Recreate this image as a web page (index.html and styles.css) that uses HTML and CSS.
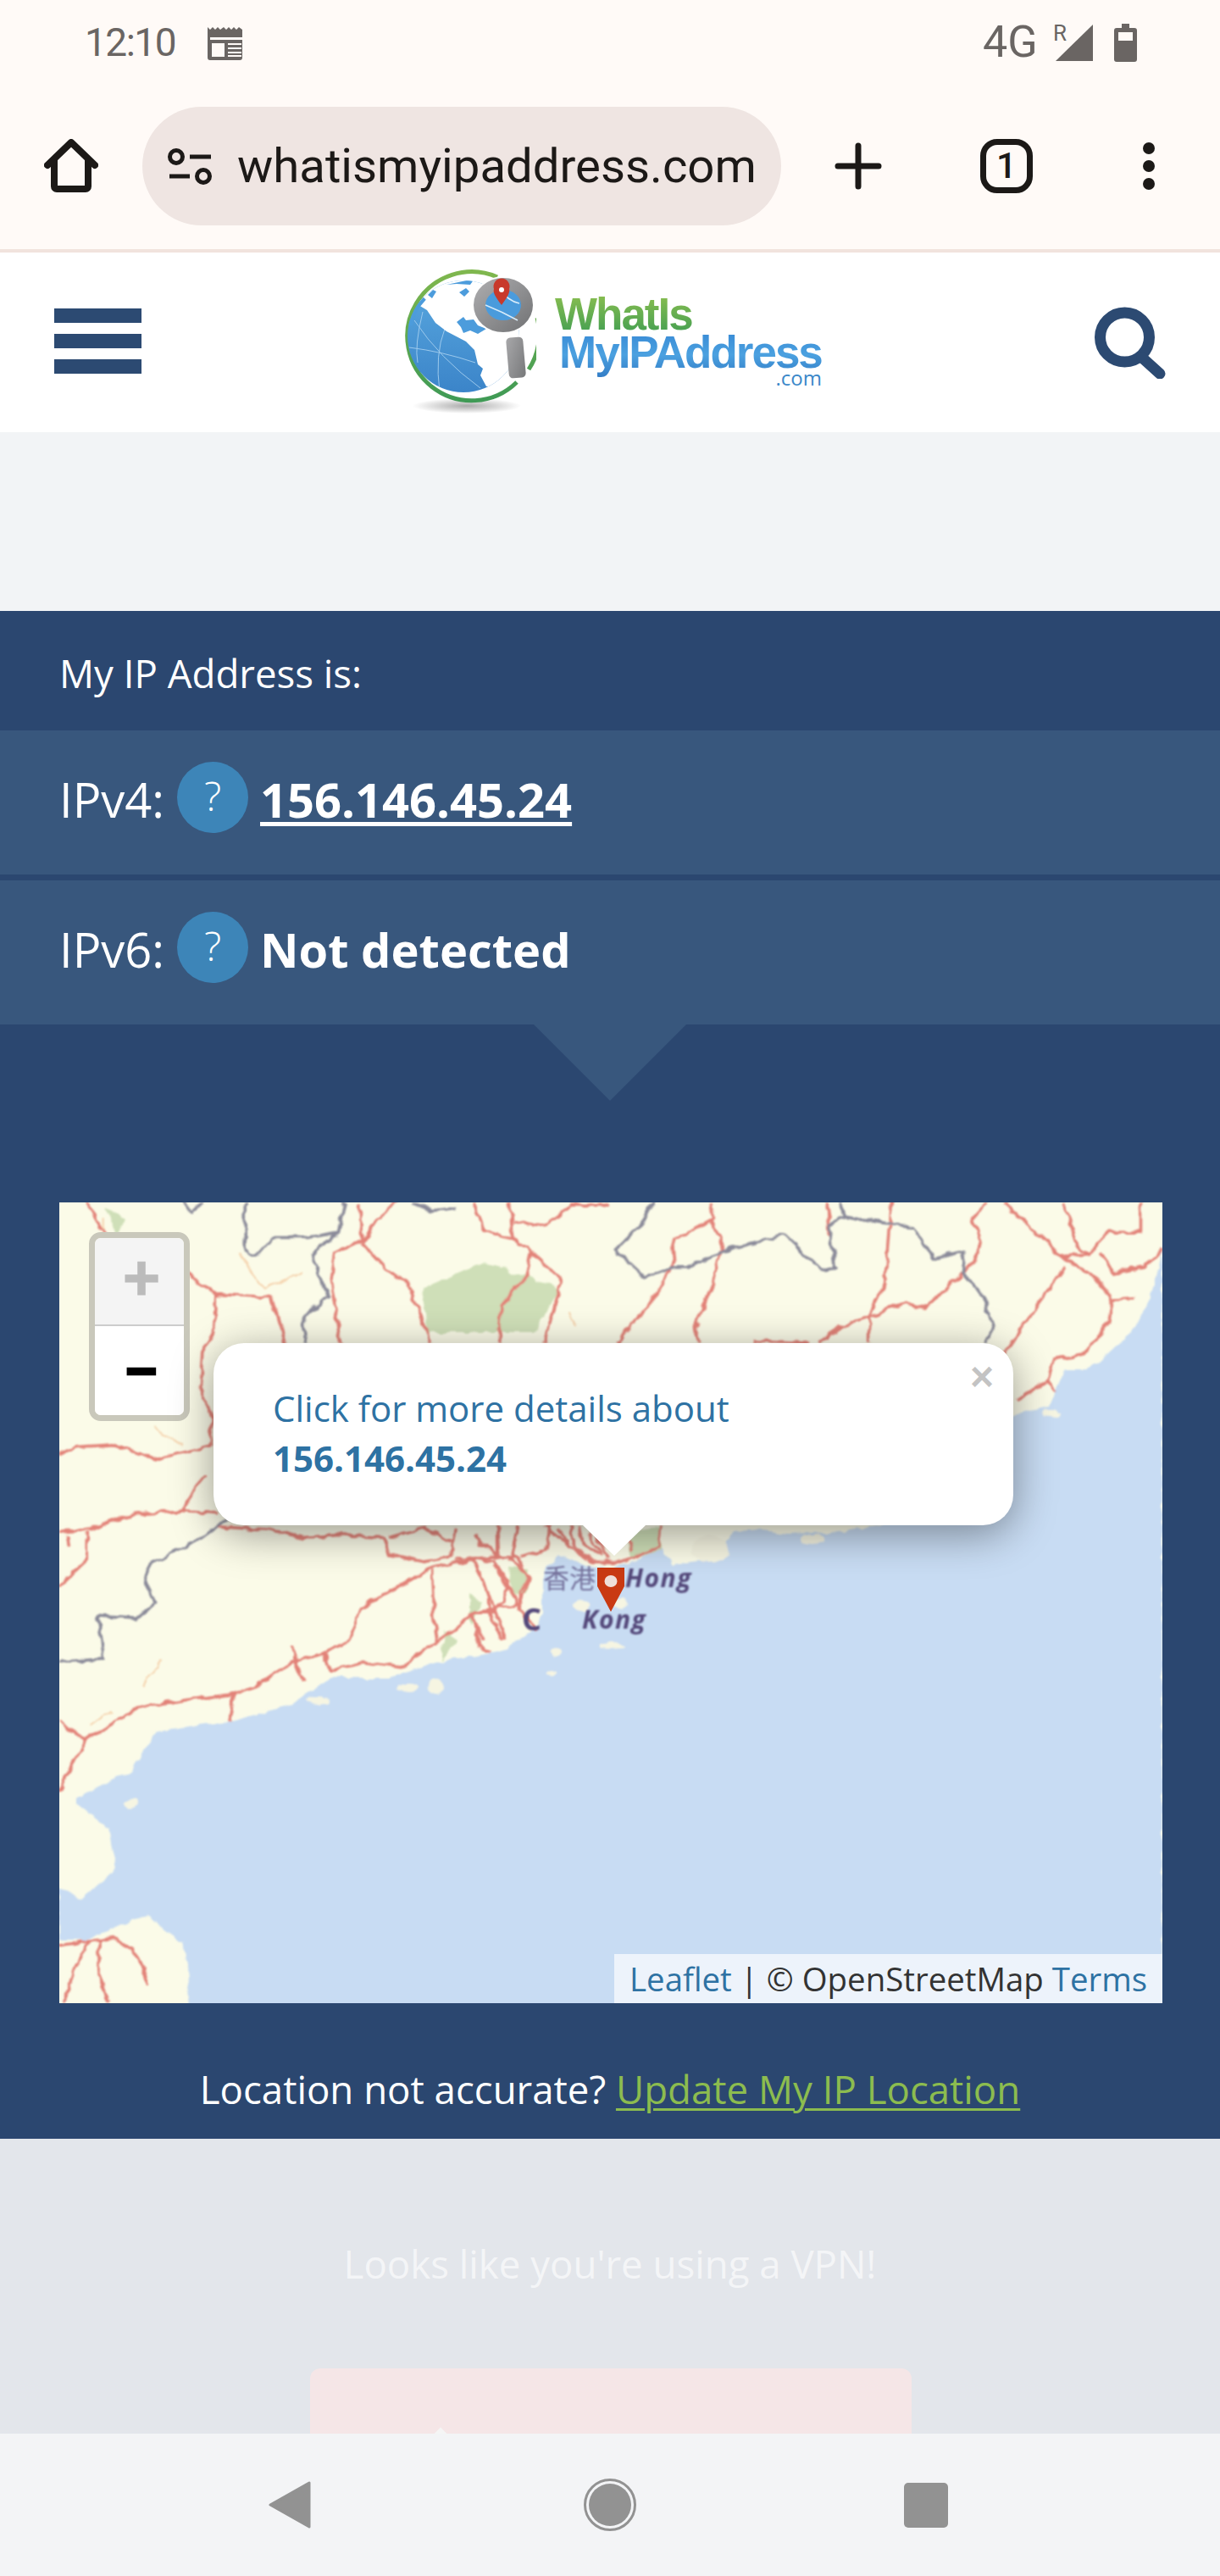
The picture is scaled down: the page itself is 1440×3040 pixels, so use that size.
FILE: index.html
```html
<!DOCTYPE html>
<html lang="en">
<head>
<meta charset="utf-8">
<title>What Is My IP Address</title>
<link rel="stylesheet" href="styles.css">
</head>
<body>
<div class="chrome">
  <div class="status">
    <span class="time">12:10</span>
    <svg class="cal" viewBox="0 0 44 39"><path fill="#6a6563" fill-rule="evenodd" d="M0 0l3 3 3-3 3 3 3-3 3 3 4-3 3 3 3-3 3 3 3-3 3 3 3-3 4 3V36a3 3 0 0 1-3 3H3a3 3 0 0 1-3-3zM3 12v3h38v-3zM5 19v16h15V19zM24 19v2h16v-2zM24 24v2h16v-2zM24 29v2h16v-2zM24 33v2h16v-2z"/></svg>
    <div class="status-right">
      <span class="net">4G</span>
      <div class="signal"><span class="roam">R</span><svg class="sig" viewBox="0 0 44 43"><path fill="#6a6563" d="M44 0V43H0z"/></svg></div>
      <svg class="batt" viewBox="0 0 27 45"><path fill="#6a6563" fill-rule="evenodd" d="M9 0h9v5h6a3 3 0 0 1 3 3v34a3 3 0 0 1-3 3H3a3 3 0 0 1-3-3V8a3 3 0 0 1 3-3h6zM5 10v10h17V10z"/></svg>
    </div>
  </div>
  <div class="toolbar">
    <svg class="home" viewBox="0 0 64 64"><path fill="none" stroke="#1c1917" stroke-width="8" stroke-linecap="round" stroke-linejoin="round" d="M4 31L32 4l28 27M12 24v32a3 3 0 0 0 3 3h34a3 3 0 0 0 3-3V24"/></svg>
    <div class="urlbar">
      <svg class="tune" viewBox="0 0 52 44"><g fill="none" stroke="#1c1917" stroke-width="5"><circle cx="10" cy="11" r="7.5"/><circle cx="42" cy="34" r="7.5"/></g><path fill="#1c1917" d="M26 8.500h25v5H26zM2 31.500h24v5H2z"/></svg>
      <span class="url">whatismyipaddress.com</span>
    </div>
    <svg class="plus" viewBox="0 0 56 56"><path stroke="#1c1917" stroke-width="7" stroke-linecap="round" d="M28 4v48M4 28h48"/></svg>
    <div class="tabs">1</div>
    <div class="dots"><i></i><i></i><i></i></div>
  </div>
</div>

<header class="site-header">
  <div class="burger"><i></i><i></i><i></i></div>
  <div class="logo">
    <svg class="globe" viewBox="0 0 156 172">
      <defs>
        <linearGradient id="ocean" x1="0" y1="0" x2="0" y2="1"><stop offset="0" stop-color="#5aa9e0"/><stop offset="1" stop-color="#3a83c8"/></linearGradient>
        <linearGradient id="ring" x1="0" y1="0" x2="0" y2="1"><stop offset="0" stop-color="#7fb74e"/><stop offset="1" stop-color="#3f9a55"/></linearGradient>
        <radialGradient id="shade"><stop offset="0" stop-color="#aaa"/><stop offset="1" stop-color="#fff"/></radialGradient>
        <linearGradient id="steel" x1="0" y1="0" x2="1" y2="1"><stop offset="0" stop-color="#a8a8aa"/><stop offset="1" stop-color="#77787a"/></linearGradient>
        <clipPath id="ball"><circle cx="70" cy="79" r="66"/></clipPath>
      </defs>
      <ellipse cx="74" cy="161" rx="64" ry="9" fill="url(#shade)"/>
      <path fill="none" stroke="url(#ring)" stroke-width="5" d="M110 9A76 76 0 1 0 133 133M157 57A76 76 0 0 1 147 118"/>
      <g clip-path="url(#ball)">
        <rect x="0" y="10" width="140" height="140" fill="url(#ocean)"/>
        <g fill="none" stroke="#9cc9ec" stroke-width="1"><path d="M12 60q30 45 78 80M6 92q40 5 78 18M48 70q-12 30-6 75M22 50q-10 40 -6 60"/></g>
        <path fill="#fff" d="M17 42L27 48 37 63 50 73 73 85 83 95 87 112 93 117 90 125 97 138 140 140V0H30z"/>
        <path fill="#4c9cdc" d="M50 18L83 11 78 18 62 17zM65 27l8-5 4 4-6 6zM62 62l8-6 3 4 9-1 5 7 10 4-10 6-9-4-8 3-3-7zM28 30l6-6 4 2-5 8z"/>
        <path fill="none" stroke="#4c9cdc" stroke-width="5" d="M7 66A64 64 0 0 1 24 34"/>
      </g>
      <rect x="122" y="80" width="20" height="48" rx="5" fill="url(#steel)" transform="rotate(-5 132 104)"/>
      <ellipse cx="117" cy="42" rx="37" ry="34" fill="#fff"/>
      <ellipse cx="117" cy="42" rx="28" ry="25" fill="#4a9bdc" stroke="url(#steel)" stroke-width="14"/>
      <path fill="none" stroke="#d8ecfa" stroke-width="1.500" d="M96 42q20 8 38 18M112 22q10 15 24 18"/>
      <path fill="#c8392b" d="M115 42C106 30 105 27 106 23a9.500 9.500 0 1 1 18 0c1 4-1 8-9 19z"/>
      <circle cx="115" cy="24" r="3" fill="#fff"/>
    </svg>
    <div class="wordmark">
      <span class="w1">WhatIs</span>
      <span class="w2">MyIPAddress</span>
      <span class="w3">.com</span>
    </div>
  </div>
  <svg class="search" viewBox="0 0 84 85"><circle cx="35.500" cy="36" r="29" fill="none" stroke="#2c4a72" stroke-width="13"/><path stroke="#2c4a72" stroke-width="13" stroke-linecap="round" d="M56 60l21 19"/></svg>
</header>

<div class="ad-gap"></div>

<section class="ip-panel">
  <div class="ip-title">My IP Address is:</div>
  <div class="ip-row"><span class="ip-label">IPv4:</span><span class="help">?</span><a class="ip-value ip-link" href="#">156.146.45.24</a></div>
  <div class="ip-row"><span class="ip-label">IPv6:</span><span class="help">?</span><span class="ip-value">Not detected</span></div>
  <div class="pointer"></div>

  <div class="map">
    <svg class="tiles" viewBox="70 1419 1302 945">
      <defs>
        <filter id="rough" filterUnits="userSpaceOnUse" x="40" y="1390" width="1360" height="1000">
          <feTurbulence type="fractalNoise" baseFrequency=".07" numOctaves="2" seed="4" result="n"/>
          <feDisplacementMap in="SourceGraphic" in2="n" scale="9" xChannelSelector="R" yChannelSelector="G"/>
          <feGaussianBlur stdDeviation=".9"/>
        </filter>
      </defs>
      <g filter="url(#rough)">
        <path class="sea" d="M1372 1470L1365 1508 1356 1534 1337 1572 1309 1598 1295 1610 1276 1617 1257 1617 1238 1661 1200 1668 1190 1680 1100 1790 983 1808 930 1810 900 1806 865 1808 841 1840 794 1846 780 1827 747 1843 720 1850 690 1848 660 1835 640 1860 640 1905 625 1925 600 1945 580 1950 519 1961 459 1980 390 1980 344 2012 275 2031 184 2044 156 2089 92 2121 92 2130 129 2159 138 2204 96 2242 70 2229V2290L100 2290 152 2267 174 2261 216 2293 225 2337 216 2380H1372z"/>
        <g class="isle">
          <ellipse cx="686" cy="1895" rx="8" ry="7"/><ellipse cx="733" cy="1892" rx="7" ry="5"/><ellipse cx="722" cy="1942" rx="14" ry="3"/>
          <ellipse cx="655" cy="1950" rx="7" ry="5"/><ellipse cx="650" cy="1975" rx="6" ry="3"/><ellipse cx="482" cy="1992" rx="12" ry="5"/>
          <ellipse cx="515" cy="1990" rx="10" ry="9"/><ellipse cx="375" cy="2008" rx="14" ry="5"/><ellipse cx="155" cy="2128" rx="7" ry="6"/>
          <ellipse cx="960" cy="1816" rx="14" ry="5"/><ellipse cx="838" cy="1828" rx="22" ry="16"/><ellipse cx="1240" cy="1668" rx="10" ry="4"/>
        </g>
        <g class="forest">
          <path d="M498 1521L570 1489 662 1521 630 1572H505z"/><path d="M124 1425L147 1438 138 1458z"/>
          <path d="M600 1850L625 1852 622 1880 604 1885z"/><path d="M525 1925L540 1935 520 1960z"/><path d="M555 1880L570 1890 555 1920z"/>
          <path d="M737 1808L780 1803 780 1830 745 1840z"/>
        </g>
        <g transform="translate(0 1400) scale(.4591 .6378)">
          <g class="minor">
            <path d="M615 125L680 190 780 160M230 1000L290 968M365 925L415 880M395 445L470 480M1460 230L1480 260M265 60L265 120"/>
          </g>
          <g class="road">
            <path d="M222 30L270 90M470 150L510 180 555 200 700 205 735 290"/>
            <path d="M555 200L550 270 520 310 515 370 545 430 540 480 400 505 290 478 200 482 152 495"/>
            <path d="M152 640L230 635 330 608 480 600 560 605M530 535L490 570 475 605"/>
            <path d="M225 640L225 690 152 740M175 645L180 665"/>
            <path d="M560 630L690 635 780 650 870 645 985 650 1000 680 1090 695 1160 685 1170 630M1160 660L1090 630M1000 650L1100 630"/>
            <path d="M1170 690L1230 690 1285 685 1280 630M1330 630L1310 690 1360 720 1340 770"/>
            <path d="M1115 705L1000 750 930 780 900 840 830 865 750 880 660 925 600 940 480 950 350 965 220 1025 152 990"/>
            <path d="M750 850L760 880 780 915M835 865L850 895 930 880 1030 890 1120 845 1220 790 1340 770"/>
            <path d="M1110 710L1115 800 1125 845M600 940L590 990M220 1025L170 1090 152 1120"/>
            <path d="M1115 705L1215 690M1215 790L1230 850 1260 860M1215 690L1260 760 1300 840M1270 700L1330 770"/>
            <path d="M152 1405L290 1390 340 1410 380 1470 380 1480M230 1395L190 1450 165 1510M255 1395L255 1460 280 1510"/>
            <path d="M925 30L930 100 860 125 850 170 875 290M930 105L1000 160 1050 180 1070 220 1110 290M930 105L970 60 1020 30"/>
            <path d="M1215 30L1245 80 1320 100 1365 120 1445 175 1400 290M1310 30L1320 100M1320 65L1400 75 1470 35 1568 35M1365 120L1350 170 1290 220 1280 290"/>
          </g>
          <g class="bound">
            <path d="M470 30L490 50 520 30M630 30L630 120 660 128 700 95 790 95 870 85 885 30M870 85L800 125 830 180 845 205 780 240 785 290M1060 30L1110 45 1175 40"/>
            <path d="M585 615L500 660 390 695 370 730 400 770 350 800 250 795 265 875 152 880"/>
          </g>
        </g>
        <g transform="translate(560 1780) scale(.3333)">
          <g class="road">
            <path d="M0 100L80 170 150 170 190 240 160 300 160 360 220 430M0 180L70 190 120 260 100 330 60 370 0 370M80 170L80 60"/>
            <path d="M160 170L250 150 270 60M340 60L350 130 420 190 520 190 650 140 660 60M400 90L450 160M300 70L340 140M0 200L50 300 50 360 100 470M30 470L0 400M150 60L130 170"/>
            <path d="M370 60L380 120 450 170M420 60L470 180M520 60L560 150M250 60L330 130 400 180"/>
          </g>
        </g>
        <g transform="translate(700 1400) scale(.4719 .6378)">
          <g class="road">
            <path d="M295 30L300 60 200 100 205 140 130 230 60 290M295 60L325 110 300 180 255 260 265 290"/>
            <path d="M585 30L590 95M745 30L730 180 690 240 690 290M690 240L780 215 830 225 920 165 960 130 970 100 950 60 985 30M610 265L690 240M560 290L610 265M400 285L540 290"/>
            <path d="M1025 30L1130 100 1170 130 1240 125 1270 100 1290 85 1370 85 1370 30M1175 30L1210 110 1240 125M1170 130L1260 170 1300 210 1355 208"/>
            <path d="M1180 150L1110 220 1070 265 1030 310M1270 120L1300 160 1380 150 1424 115M1300 210L1290 250 1230 310 1150 320 1135 360 1060 395M1135 360L1160 380"/>
          </g>
          <g class="bound">
            <path d="M150 30L120 70 55 118 130 170 200 150 240 150 320 120 400 105 480 90 570 155 605 150 590 70 630 55 745 70 800 75 850 135 930 120 925 160 980 210 1000 260 985 290M630 55L620 30"/>
          </g>
        </g>
      </g>
      <g class="label">
        <text class="lbl-cjk" x="641" y="1874">香港</text>
        <text class="lbl" x="738" y="1873">Hong</text>
        <text class="lbl" x="687" y="1922">Kong</text>
        <text class="lbl lbl-c" x="616" y="1924">C</text>
      </g>
      <path class="pin" d="M705 1850H737V1872L721 1902 705 1872z"/>
      <ellipse class="pin-dot" cx="721" cy="1866" rx="7.500" ry="7"/>
    </svg>

    <div class="zoom-ctl">
      <div class="zoom-in">+</div>
      <div class="zoom-out">−</div>
    </div>

    <div class="popup">
      <span class="popup-close">×</span>
      <div class="popup-text">Click for more details about<br><b>156.146.45.24</b></div>
      <div class="popup-tip"></div>
    </div>

    <div class="attrib"><a href="#">Leaflet</a> | © OpenStreetMap <a href="#">Terms</a></div>
  </div>

  <div class="loc-row">Location not accurate? <a href="#">Update My IP Location</a></div>
</section>

<section class="vpn">
  <div class="vpn-title">Looks like you're using a VPN!</div>
  <div class="vpn-box"><i class="vpn-mark"></i></div>
</section>

<nav class="sysnav">
  <svg class="nav-back" viewBox="0 0 50 56"><path fill="#929292" stroke="#929292" stroke-width="3" stroke-linejoin="round" d="M48 2V54L2 28z"/></svg>
  <svg class="nav-home" viewBox="0 0 62 64"><circle cx="31" cy="32" r="29.500" fill="none" stroke="#929292" stroke-width="3"/><circle cx="31" cy="32" r="25" fill="#929292"/></svg>
  <div class="nav-recent"></div>
</nav>
</body>
</html>
```
FILE: styles.css
```css
* { box-sizing: border-box; }
html, body { margin: 0; padding: 0; }
body {
  width: 1440px;
  height: 3040px;
  overflow: hidden;
  font-family: "Open Sans", "Liberation Sans", sans-serif;
  background: #f3f4f6;
}
a { color: inherit; }

/* browser chrome */
.chrome {
  height: 298px;
  background: #fffaf7;
  border-bottom: 4px solid #f1e3dd;
  font-family: Roboto, "Liberation Sans", sans-serif;
}
.status {
  height: 100px;
  display: flex;
  align-items: center;
  padding: 0 98px 0 100px;
  color: #6a6563;
}
.time { font-size: 46px; letter-spacing: -1.5px; line-height: 1; }
.cal { width: 44px; height: 39px; margin: 2px 0 0 38px; }
.status-right { margin-left: auto; display: flex; align-items: center; }
.net { font-size: 52px; line-height: 1; width: 86px; }
.signal { position: relative; width: 44px; height: 43px; }
.roam { position: absolute; left: -3px; top: -3px; font-size: 26px; line-height: 1; }
.sig { width: 44px; height: 43px; display: block; }
.batt { width: 27px; height: 45px; margin-left: 25px; }

.toolbar {
  height: 140px;
  margin-top: 26px;
  display: flex;
  align-items: center;
  padding-left: 52px;
  color: #1c1917;
}
.home { width: 64px; height: 64px; }
.urlbar {
  width: 754px;
  height: 140px;
  margin-left: 52px;
  border-radius: 70px;
  background: #efe5e2;
  display: flex;
  align-items: center;
  padding-left: 30px;
}
.tune { width: 52px; height: 44px; }
.url { font-size: 56.3px; margin-left: 30px; line-height: 1; white-space: nowrap; }
.plus { width: 56px; height: 56px; margin-left: 63px; }
.tabs {
  width: 62px;
  height: 64px;
  margin-left: 116px;
  border: 7px solid #1c1917;
  border-radius: 20px;
  font-size: 42px;
  font-weight: 500;
  line-height: 50px;
  text-align: center;
}
.dots { margin-left: 130px; display: flex; flex-direction: column; gap: 7px; }
.dots i { display: block; width: 14px; height: 14px; border-radius: 50%; background: #1c1917; }

/* site header */
.site-header {
  height: 212px;
  background: #fff;
  display: flex;
  align-items: center;
  justify-content: space-between;
  padding: 0 64px;
}
.burger { width: 103px; margin-bottom: 3px; display: flex; flex-direction: column; gap: 13px; }
.burger i { display: block; height: 17px; background: #2c4a72; }
.logo { display: flex; align-items: flex-start; width: 491px; margin-right: 14px; }
.globe { width: 156px; height: 172px; flex: none; }
.wordmark {
  margin: 30px 0 0 22px;
  flex: 1;
  display: flex;
  flex-direction: column;
  font-family: "Liberation Sans", Arial, sans-serif;
  font-weight: 700;
}
.w1, .w2 {
  font-size: 53px;
  line-height: 45px;
  letter-spacing: -2px;
  -webkit-background-clip: text;
  background-clip: text;
  color: transparent;
  white-space: nowrap;
}
.w1 { background-image: linear-gradient(#88bd50, #46a052); }
.w2 {
  background-image: linear-gradient(#3a8cd6, #4ba1e0 45%, #2f77c2);
  margin: 0 0 -12px 5px;
  padding-bottom: 12px;
}
.w3 {
  align-self: flex-end;
  margin-top: -1px;
  font: 400 24px/18px "Open Sans", sans-serif;
  color: #3b88c9;
}
.search { width: 84px; height: 85px; }

.ad-gap { height: 211px; background: #f2f4f6; }

/* ip panel */
.ip-panel { height: 1803px; background: #2b4770; color: #fff; display: flex; flex-direction: column; }
.ip-title {
  height: 141px;
  flex: none;
  padding-left: 70px;
  font-size: 45.6px;
  font-weight: 400;
  line-height: 146px;
}
.ip-row {
  height: 170px;
  flex: none;
  background: #38577d;
  display: flex;
  align-items: center;
  padding: 0 0 8px 70px;
  font-size: 56px;
}
.ip-row + .ip-row { margin-top: 7px; }
.ip-label { font-weight: 400; width: 124px; }
.help {
  width: 84px;
  height: 84px;
  margin: 0 14px 4px 15px;
  border-radius: 50%;
  background: #3d85b8;
  font-size: 48px;
  font-weight: 300;
  line-height: 80px;
  text-align: center;
}
.ip-value { font-weight: 700; }
.ip-link { text-decoration: underline; text-decoration-thickness: 5px; text-underline-offset: 5px; }
.pointer {
  flex: none;
  width: 180px;
  height: 90px;
  margin: 0 auto 120px;
  background: #38577d;
  clip-path: polygon(0 0, 100% 0, 50% 100%);
}

/* map */
.map {
  position: relative;
  flex: none;
  width: 1302px;
  height: 945px;
  margin-left: 70px;
  background: #fbfbe8;
  overflow: hidden;
}
.tiles { display: block; width: 1302px; height: 945px; }
.sea { fill: #c8dcf3; }
.isle ellipse { fill: #f6f5e2; }
.forest path { fill: #cfdfb8; }
.road path, .bound path, .minor path {
  fill: none;
  stroke-linejoin: round;
  vector-effect: non-scaling-stroke;
}
.road path { stroke: #e28278; stroke-width: 3.5px; }
.bound path { stroke: #8a8a99; stroke-width: 3.5px; }
.minor path { stroke: #f5d3ae; stroke-width: 2px; }
.label { filter: blur(.8px); }
.label text { fill: #54487a; }
.lbl { font: italic 700 30px "Open Sans", sans-serif; letter-spacing: 1.5px; }
.lbl-c { font-style: normal; font-size: 36px; }
.lbl-cjk { font: 400 31px "Noto Sans CJK TC", sans-serif; opacity: .7; }
.pin { fill: #c93a13; }
.pin-dot { fill: #efe0da; }

.zoom-ctl {
  position: absolute;
  left: 35px;
  top: 35px;
  width: 119px;
  height: 223px;
  border: 7px solid #c9c8bb;
  border-radius: 14px;
  font-family: "Liberation Mono", monospace;
  font-weight: 700;
  text-align: center;
  overflow: hidden;
}
.zoom-in { height: 104px; background: #f4f4f4; color: #bbb; border-bottom: 2px solid #ccc; padding-left: 5px; font-size: 76px; line-height: 106px; -webkit-text-stroke: 1px #bbb; }
.zoom-out { height: 105px; background: #fff; color: #000; padding-left: 5px; font-size: 64px; line-height: 116px; -webkit-text-stroke: 2.5px #000; }

.popup {
  position: absolute;
  left: 182px;
  top: 166px;
  width: 944px;
  height: 215px;
  background: #fff;
  border-radius: 36px;
  padding: 47px 0 0 70px;
  box-shadow: 0 10px 50px rgba(0, 0, 0, .4);
  color: #2e72a3;
}
.popup-text { font-size: 42px; line-height: 59px; }
.popup-close {
  position: absolute;
  right: 23px;
  top: 10px;
  font: 700 48px/60px "Liberation Sans", sans-serif;
  color: #c3c3c3;
}
.popup-tip {
  position: absolute;
  left: 436px;
  top: 100%;
  width: 74px;
  height: 36px;
  background: #fff;
  clip-path: polygon(0 0, 100% 0, 50% 100%);
}
.attrib {
  position: absolute;
  right: 0;
  bottom: 0;
  height: 58px;
  padding: 0 18px;
  background: #edf3fb;
  font-size: 38.4px;
  line-height: 58px;
  color: #333;
  white-space: nowrap;
}
.attrib a { color: #2e72a3; text-decoration: none; }

.loc-row {
  flex: 1;
  text-align: center;
  font-size: 45.6px;
  line-height: 60px;
  padding-top: 71px;
}
.loc-row a { color: #8cbc4f; text-decoration: underline; text-decoration-thickness: 3px; text-underline-offset: 5px; }

/* vpn */
.vpn { height: 348px; background: #e3e6eb; overflow: hidden; }
.vpn-title {
  padding-top: 117px;
  text-align: center;
  font-size: 45.6px;
  line-height: 60px;
  color: #f4f5f7;
}
.vpn-box {
  position: relative;
  width: 710px;
  height: 120px;
  margin: 94px 0 0 366px;
  background: #f5e6e7;
  border-radius: 12px;
}
.vpn-mark {
  position: absolute;
  left: 141px;
  top: 75px;
  width: 26px;
  height: 26px;
  background: #f5f5f5;
  transform: rotate(45deg);
}

/* system nav */
.sysnav { height: 168px; background: #f3f4f6; display: flex; align-items: center; padding-left: 317px; }
.nav-back { width: 50px; height: 56px; }
.nav-home { width: 62px; height: 64px; margin-left: 322px; }
.nav-recent { width: 52px; height: 53px; margin-left: 316px; background: #929292; border-radius: 5px; }
```
